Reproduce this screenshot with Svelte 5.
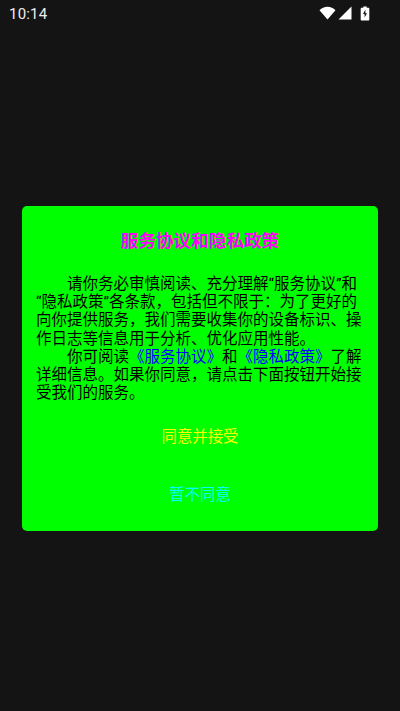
<script>
  const title = '服务协议和隐私政策';
</script>

<div class="page">
  <div class="statusbar">
    <span class="time">10:14</span>
    <div class="icons">
      <svg class="wifi" width="17" height="14" viewBox="0 0 17 14"><path d="M0.5 4.2C2.6 2 5.4 0.8 8.5 0.8s5.9 1.2 8 3.4L8.5 13.4z" fill="#fff" /></svg>
      <svg class="signal" width="14" height="14" viewBox="0 0 14 14"><path d="M13.5 0.5V13.5H0.5z" fill="#fff" /></svg>
      <svg width="10" height="15" viewBox="0 0 10 15">
        <path d="M3.3 0.5h3.4v1.3h1.6c.6 0 1 .4 1 1v10.7c0 .6-.4 1-1 1H1.7c-.6 0-1-.4-1-1V2.8c0-.6.4-1 1-1h1.6z" fill="#fff" />
        <path d="M5.4 3.6 3 8h1.6v3.6L7 7.2H5.4z" fill="#141414" />
      </svg>
    </div>
  </div>

  <div class="center">
    <div class="dialog">
      <h1>{title}</h1>
      <div class="body">
        <p>请你务必审慎阅读、充分理解“服务协议”和<wbr />“隐私政策”各条款，包括但不限于：为了更好的向你提供服务，我们需要收集你的设备标识、操作日志等信息用于分析、优化应用性能。</p>
        <p>你可阅读<span class="link">《服务协议》</span>和<span class="link">《隐私政策》</span>了解详细信息。如果你同意，请点击下面按钮开始接受我们的服务。</p>
      </div>
      <button class="agree">同意并接受</button>
      <button class="refuse">暂不同意</button>
    </div>
  </div>
</div>

<style>
  :global(body) {
    background: #141414;
  }

  .page {
    display: flex;
    flex-direction: column;
    height: 711px;
    background: #141414;
    font-family: Roboto, "Noto Sans CJK SC", sans-serif;
  }

  .statusbar {
    display: flex;
    justify-content: space-between;
    align-items: center;
    height: 26px;
    padding: 0 30px 0 9px;
    box-sizing: border-box;
    flex-shrink: 0;
  }

  .time {
    margin-top: 2px;
    color: #eee;
    font-size: 15px;
    letter-spacing: 0.2px;
  }

  .icons {
    display: flex;
    align-items: center;
    gap: 2px;
  }

  .signal {
    margin-right: 6px;
  }

  .center {
    flex: 1;
    display: flex;
    align-items: center;
    justify-content: center;
  }

  .dialog {
    width: 356px;
    height: 325px;
    box-sizing: border-box;
    background: #00ff00;
    border-radius: 5px;
    padding: 23px 14px 0;
    display: flex;
    flex-direction: column;
    align-items: center;
  }

  h1 {
    margin: 0;
    color: #ff00ff;
    font-size: 17.6px;
    font-weight: 700;
    line-height: 24px;
  }

  .body {
    margin-top: 22px;
    width: 100%;
    color: #000;
    font-size: 15.5px;
    line-height: 18.2px;
  }

  p {
    margin: 0;
    text-indent: 2em;
  }

  .link {
    color: #0000ff;
  }

  button {
    border: none;
    background: none;
    padding: 0;
    font: inherit;
    font-size: 15.4px;
    line-height: 20px;
  }

  .agree {
    margin-top: 25px;
    color: #ffff00;
  }

  .refuse {
    margin-top: 38px;
    color: #00ffff;
  }
</style>
